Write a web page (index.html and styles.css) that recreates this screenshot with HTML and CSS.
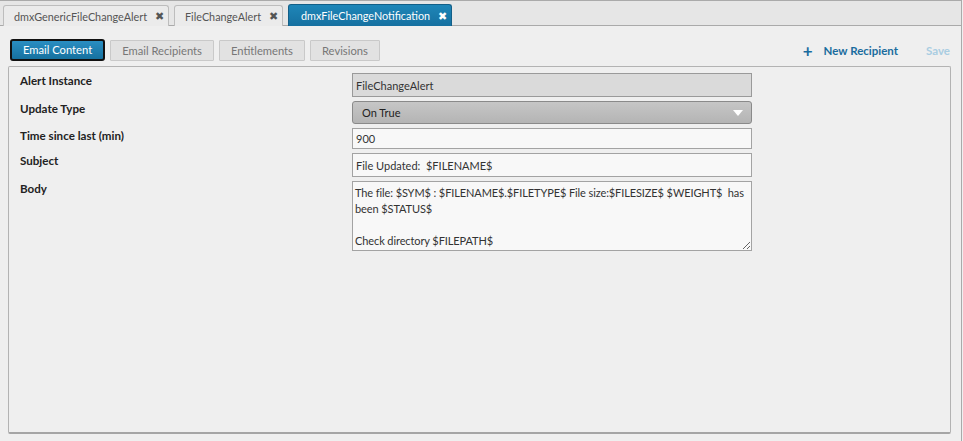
FILE: index.html
```html
<!DOCTYPE html>
<html lang="en">
<head>
  <meta charset="UTF-8">
  <title>dmxFileChangeNotification</title>
  <link rel="stylesheet" href="styles.css">
</head>
<body>
  <div class="frame">
    <div class="tabstrip">
      <div class="tab"><span>dmxGenericFileChangeAlert</span><span class="close">&#10006;</span></div>
      <div class="tab"><span>FileChangeAlert</span><span class="close">&#10006;</span></div>
      <div class="tab active"><span>dmxFileChangeNotification</span><span class="close">&#10006;</span></div>
    </div>

    <div class="toolbar">
      <div class="subtabs">
        <button class="subtab selected">Email Content</button>
        <button class="subtab">Email Recipients</button>
        <button class="subtab">Entitlements</button>
        <button class="subtab">Revisions</button>
      </div>
      <div class="actions">
        <span class="action"><span class="plus">+</span>New Recipient</span>
        <span class="action disabled">Save</span>
      </div>
    </div>

    <div class="panel">
      <div class="form">
        <label class="lbl">Alert Instance</label>
        <div class="field readonly">FileChangeAlert</div>

        <label class="lbl">Update Type</label>
        <div class="field select">
          <span>On True</span>
          <span class="arrow"></span>
        </div>

        <label class="lbl">Time since last (min)</label>
        <div class="field short">900</div>

        <label class="lbl">Subject</label>
        <div class="field">File Updated:&nbsp; $FILENAME$</div>

        <label class="lbl">Body</label>
        <textarea class="field body">The file: $SYM$ : $FILENAME$.$FILETYPE$ File size:$FILESIZE$ $WEIGHT$  has been $STATUS$

Check directory $FILEPATH$</textarea>
      </div>
    </div>
  </div>
</body>
</html>
```

FILE: styles.css
```css
body {
  margin: 0;
  background-color: #efefef;
  font-family: Lato, "Noto Sans", sans-serif;
  font-size: 11px;
  color: #333;
}

.frame {
  width: 962px;
  height: 441px;
  border-right: 1px solid #aaa;
  box-sizing: border-box;
  display: flex;
  flex-direction: column;
}

/* top document tabs */
.tabstrip {
  height: 26px;
  box-sizing: border-box;
  background-color: #e6e6e6;
  border-top: 1px solid #aaa;
  border-bottom: 1px solid #aaa;
  display: flex;
  align-items: flex-end;
  gap: 5px;
  padding-left: 3px;
}

.tab {
  height: 21px;
  box-sizing: border-box;
  margin-bottom: -1px;
  padding: 0 4px 0 10px;
  display: flex;
  align-items: center;
  gap: 8px;
  background-color: #ebebeb;
  border: 1px solid #bdbdbd;
  border-bottom: none;
  border-radius: 3px 3px 0 0;
  color: #555;
  font-size: 10.8px;
}

.tab .close {
  font-size: 10.5px;
  color: #555;
}

.tab.active {
  height: 22px;
  background: linear-gradient(#1f86b8, #1570a0);
  border-color: #135f88;
  color: #fff;
  padding: 0 4px 0 12px;
  gap: 8px;
}

.tab.active .close {
  color: #fff;
}

/* secondary buttons row */
.toolbar {
  display: flex;
  justify-content: space-between;
  align-items: center;
  padding: 13px 11px 0 10px;
  height: 22px;
}

.subtabs {
  display: flex;
  gap: 5px;
}

.subtab {
  height: 21px;
  padding: 0 11px;
  margin: 0;
  font-family: inherit;
  font-size: 11.2px;
  color: #777;
  background-color: #e2e2e2;
  border: 1px solid #c9c9c9;
  border-radius: 1px;
}

.subtab.selected {
  height: 22px;
  margin-top: -1px;
  color: #fff;
  background: linear-gradient(#2a8ec2, #16719f);
  border: 2px solid #111;
  border-radius: 3px;
  padding: 0 11px;
}

.actions {
  display: flex;
  gap: 28px;
  font-weight: bold;
  font-size: 11.5px;
}

.action {
  color: #1a6c9e;
  display: flex;
  align-items: center;
}

.action .plus {
  font-size: 17px;
  margin-right: 11px;
  line-height: 1;
}

.action.disabled {
  color: #a9cde2;
}

/* main form panel */
.panel {
  margin: 5px 10px 7px 8px;
  flex: 1;
  border: 1px solid #b3b3b3;
  border-bottom: 2px solid #a5a5a5;
  border-radius: 2px;
  padding: 6px 0 0 11px;
}

.form {
  display: grid;
  grid-template-columns: 332px 400px;
  row-gap: 4px;
}

.lbl {
  font-weight: bold;
  font-size: 11.6px;
  color: #222;
  line-height: 14px;
  padding-top: 1px;
}

.field {
  box-sizing: border-box;
  height: 24px;
  border: 1px solid #a3a3a3;
  background-color: #f8f8f8;
  padding: 0 3px;
  display: flex;
  align-items: center;
  color: #333;
  font-size: 11px;
}

.field.readonly {
  background-color: #dadada;
  border-color: #9a9a9a;
}

.field.select {
  height: 23px;
  justify-content: space-between;
  padding: 0 8px 0 9px;
  background: linear-gradient(#c6c6c6, #b4b4b4);
  border: 1px solid #8a8a8a;
  border-radius: 3px;
  color: #222;
}

.arrow {
  width: 0;
  height: 0;
  border-left: 5px solid transparent;
  border-right: 5px solid transparent;
  border-top: 6px solid #fff;
}

.field.short {
  height: 21px;
}

.field.body {
  height: 70px;
  display: block;
  padding: 3px 2px;
  font-family: inherit;
  line-height: 16px;
  letter-spacing: -0.1px;
  resize: both;
}
```
